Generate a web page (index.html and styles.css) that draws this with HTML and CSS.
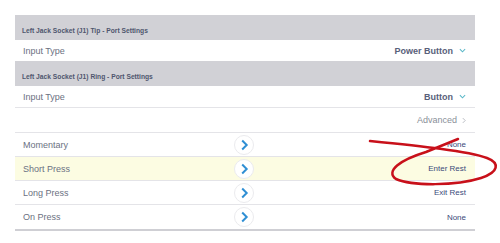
FILE: index.html
```html
<!DOCTYPE html>
<html>
<head>
    <title>Port Settings</title>
    <link rel="stylesheet" href="styles.css">
</head>
<body>
    <div class="panel">
        <!-- Tip settings -->
        <div class="section-head">Left Jack Socket (J1) Tip - Port Settings</div>
        <div class="row short">
            <span class="label">Input Type</span>
            <span class="picker">Power Button
                <svg class="down" viewBox="0 0 8 5"><path d="M1 1 L4 4 L7 1"/></svg>
            </span>
        </div>

        <!-- Ring settings -->
        <div class="section-head">Left Jack Socket (J1) Ring - Port Settings</div>
        <div class="row short ring">
            <span class="label">Input Type</span>
            <span class="picker">Button
                <svg class="down" viewBox="0 0 8 5"><path d="M1 1 L4 4 L7 1"/></svg>
            </span>
        </div>
        <div class="row tall">
            <span></span>
            <span class="advanced">Advanced
                <svg class="next" viewBox="0 0 5 8"><path d="M1 1 L4 4 L1 7"/></svg>
            </span>
        </div>

        <!-- Actions -->
        <div class="row action">
            <span class="label">Momentary</span>
            <span class="go"><svg viewBox="0 0 20 20"><path d="M8 5 L13 10 L8 15"/></svg></span>
            <span class="value">None</span>
        </div>
        <div class="row action marked">
            <span class="label">Short Press</span>
            <span class="go"><svg viewBox="0 0 20 20"><path d="M8 5 L13 10 L8 15"/></svg></span>
            <span class="value">Enter Rest</span>
        </div>
        <div class="row action">
            <span class="label">Long Press</span>
            <span class="go"><svg viewBox="0 0 20 20"><path d="M8 5 L13 10 L8 15"/></svg></span>
            <span class="value">Exit Rest</span>
        </div>
        <div class="row action last">
            <span class="label">On Press</span>
            <span class="go"><svg viewBox="0 0 20 20"><path d="M8 5 L13 10 L8 15"/></svg></span>
            <span class="value">None</span>
        </div>
    </div>

    <!-- Red hand-drawn mark -->
    <svg class="scribble" viewBox="0 0 500 243">
        <path d="M370 141 C 420 146, 468 151, 487 158 C 500 163, 499 172, 481 178 C 456 186, 412 186, 396 179 C 385 171, 400 160, 426 152 L 458 139"/>
    </svg>
</body>
</html>
```

FILE: styles.css
```css
/* General Styles */
body {
    margin: 0;
    padding: 15px 0 0 15px;
    background-color: #ffffff;
    font-family: "Liberation Sans", Arial, sans-serif;
    width: 460px;
}

.panel {
    border-bottom: 2px solid #cfcfd4;
}

.section-head {
    background-color: #d1d1d6;
    color: #4f566e;
    font-size: 6.7px;
    font-weight: bold;
    padding: 13px 7px 6px;
    height: 6px;
    line-height: 6px;
}

.row {
    display: flex;
    align-items: center;
    justify-content: space-between;
    height: 24px;
    padding: 0 9px 0 8px;
    border-bottom: 1px solid #e4e4e8;
    background-color: #ffffff;
    box-sizing: border-box;
}

.row.short {
    height: 21px;
    border-bottom: none;
}

.row.ring {
    height: 22px;
    border-bottom: 1px solid #e4e4e8;
}

.row.tall {
    height: 25px;
}

.row.last {
    border-bottom: none;
}

.label {
    color: #6b7182;
    font-size: 9px;
}

.picker {
    display: flex;
    align-items: center;
    gap: 6px;
    color: #59607a;
    font-size: 9px;
    font-weight: bold;
}

.advanced {
    display: flex;
    align-items: center;
    gap: 5px;
    color: #8a8f99;
    font-size: 9px;
}

svg.down {
    width: 7px;
    height: 5px;
    fill: none;
    stroke: #5bb8c8;
    stroke-width: 1.2;
}

svg.next {
    width: 4px;
    height: 7px;
    fill: none;
    stroke: #a9adb5;
    stroke-width: 1;
}

/* Action rows */
.row.action {
    display: grid;
    grid-template-columns: 1fr 20px 1fr;
}

.row.marked {
    background-color: #fcfce2;
}

.go {
    width: 20px;
    height: 20px;
    border-radius: 50%;
    border: 1px solid #ebebee;
    background-color: #ffffff;
    box-sizing: border-box;
    margin-left: -1px;
}

.go svg {
    display: block;
    width: 18px;
    height: 18px;
    fill: none;
    stroke: #2f8fd4;
    stroke-width: 2.2;
}

.value {
    text-align: right;
    color: #3a4a7a;
    font-size: 8px;
}

/* Annotation */
.scribble {
    position: absolute;
    left: 0;
    top: 0;
    width: 500px;
    height: 243px;
    pointer-events: none;
}

.scribble path {
    fill: none;
    stroke: #c8101a;
    stroke-width: 2.5;
    stroke-linecap: round;
    stroke-linejoin: round;
}
```
